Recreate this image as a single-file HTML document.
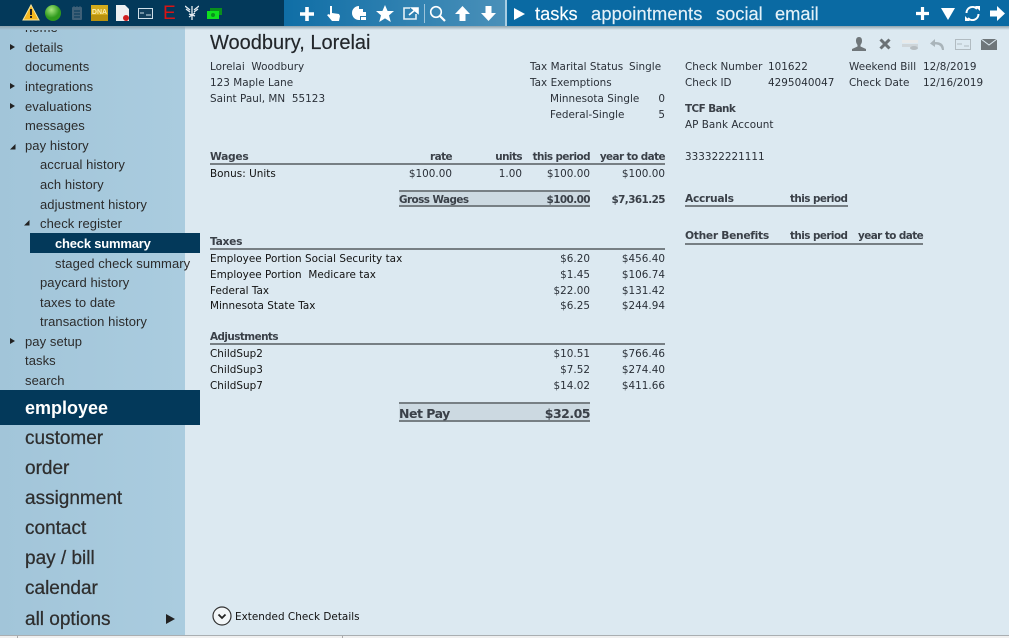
<!DOCTYPE html>
<html><head><meta charset="utf-8">
<style>
html,body{margin:0;padding:0}
body{width:1009px;height:638px;overflow:hidden;position:relative;background:#dce9f1;font-family:"DejaVu Sans",sans-serif}
#p{position:absolute;left:0;top:0;width:1009px;height:638px;overflow:hidden}
#p div,#p svg{position:absolute}
.s{white-space:nowrap;font-family:"Liberation Sans",sans-serif;font-size:13px;line-height:16px;height:16px;color:#2b2b2b;margin-top:1px;letter-spacing:.08px}
.b{white-space:nowrap;font-family:"Liberation Sans",sans-serif;font-size:19px;line-height:24px;height:24px;color:#2e2e2e;left:25px;margin-top:1px;-webkit-text-stroke:.25px #2e2e2e}
.n{white-space:nowrap;font-family:"Liberation Sans",sans-serif;font-size:18.3px;line-height:22px;height:22px;color:#e4f1f8;top:3px;-webkit-text-stroke:.15px #e4f1f8}
.t{white-space:nowrap;font-size:10.4px;line-height:14px;height:14px;color:#2a3038;letter-spacing:.03px;margin-top:1px}
.r{text-align:right;width:120px}
.h{font-weight:bold;font-size:10.4px;letter-spacing:-.55px;color:#3a4048}
.hh{font-size:10.7px;letter-spacing:-.3px}
.l{height:2px;background:#777f84}
.a{width:0;height:0;border-left:5px solid #222;border-top:3.5px solid transparent;border-bottom:3.5px solid transparent}
</style></head><body><div id="p">

<div style="left:0;top:0;width:185px;height:638px;background:linear-gradient(90deg,#a2c5d9,#aaccdf)"></div>
<div style="left:0;top:26px;width:1009px;height:4px;background:linear-gradient(#8fa3ae,rgba(200,215,225,0))"></div>

<div style="left:0;top:0;width:1009px;height:26px;background:#0a6aa3"></div>
<div style="left:0;top:0;width:284px;height:26px;background:#03395a"></div>
<div style="left:284px;top:0;width:222px;height:26px;background:linear-gradient(90deg,#0f6ea6,#4a90b9)"></div>
<div style="left:424px;top:4px;width:1px;height:19px;background:#9cc3da"></div>
<div style="left:505px;top:0;width:2px;height:26px;background:#a8cde2"></div>

<svg style="left:22px;top:4px" width="18" height="17" viewBox="0 0 18 17"><path d="M9 1L17 16H1Z" fill="#f6b81e" stroke="#f8e7a0"/><rect x="8" y="5" width="2" height="6" fill="#222"/><rect x="8" y="12" width="2" height="2" fill="#222"/></svg>
<svg style="left:45px;top:5px" width="16" height="16"><defs><radialGradient id="g" cx=".4" cy=".3"><stop offset="0" stop-color="#a8e67e"/><stop offset="1" stop-color="#2f9a1d"/></radialGradient></defs><circle cx="8" cy="8" r="8" fill="url(#g)"/></svg>
<svg style="left:71px;top:5px" width="12" height="16"><rect x="1" y="2" width="10" height="13" rx="1" fill="#3f6077"/><path d="M3 6h6M3 9h6M3 12h6" stroke="#03395a"/><path d="M3 1v2M6 1v2M9 1v2" stroke="#3f6077"/></svg>
<svg style="left:91px;top:5px" width="17" height="16"><rect width="17" height="16" fill="#d3ab1c"/><rect y="10" width="17" height="6" fill="#b9920f"/></svg>
<div style="left:91px;top:8px;width:17px;text-align:center;font:bold 7px 'Liberation Sans',sans-serif;color:#fbeeb0;line-height:10px">DNA</div>
<svg style="left:116px;top:5px" width="14" height="17"><path d="M0 0H9L13 4V16H0Z" fill="#eef0f1"/><circle cx="10" cy="13" r="3" fill="#cf1f1f"/></svg>
<svg style="left:138px;top:8px" width="15" height="11"><rect x=".5" y=".5" width="14" height="10" fill="#123f5c" stroke="#cfe0ea"/><path d="M2 5h4M8 7h5" stroke="#cfe0ea"/></svg>
<div style="left:163px;top:4px;font:19px/19px 'Liberation Sans',sans-serif;color:#d81414;white-space:nowrap">E</div>
<svg style="left:185px;top:5px" width="14" height="16"><path d="M0 1L5 5M14 1L9 5M1 4L5 7M13 4L9 7M7 1V15M4 9L10 11M10 8L4 12" stroke="#e5edf2" stroke-width="1.3" fill="none"/></svg>
<svg style="left:207px;top:8px" width="15" height="11"><rect x="3" y="0" width="12" height="7" fill="#0a8f1d"/><rect y="3" width="12" height="8" fill="#10e01f"/><circle cx="6" cy="7" r="2" fill="#0a8f1d"/></svg>

<svg style="left:299px;top:6px" width="16" height="16"><path d="M8 1v14M1 8h14" stroke="#fff" stroke-width="3.6"/></svg>
<svg style="left:326px;top:5px" width="16" height="17"><path d="M4 1h2v7l7 1 1 2-1 5H6L1 10l2-1 1 1Z" fill="#fff"/></svg>
<svg style="left:351px;top:5px" width="16" height="17"><path d="M8 1a7 7 0 1 0 0 14h1v-4h6V7h-3V4H8Z" fill="#fff"/><rect x="10" y="12" width="5" height="3" fill="#fff"/></svg>
<svg style="left:376px;top:5px" width="18" height="17"><path d="M9 0l2.6 6H18l-5 4.4L14.8 17 9 13.4 3.2 17 5 10.4 0 6h6.4Z" fill="#fff"/></svg>
<svg style="left:402px;top:6px" width="18" height="15"><path d="M8 2H2v11h12V8" stroke="#e4f0f6" stroke-width="1.6" fill="none"/><path d="M7 9l6-5M10 2h6v5z" stroke="#fff" stroke-width="1.6" fill="#fff"/></svg>
<svg style="left:429px;top:5px" width="17" height="17"><circle cx="7" cy="7" r="5.3" stroke="#fff" stroke-width="1.6" fill="none"/><path d="M11 11l5 5" stroke="#fff" stroke-width="2.2"/></svg>
<svg style="left:455px;top:6px" width="15" height="15"><path d="M7.5 0L15 8H10.5V15H4.5V8H0Z" fill="#fff"/></svg>
<svg style="left:481px;top:6px" width="15" height="15"><path d="M7.5 15L15 7H10.5V0H4.5V7H0Z" fill="#fff"/></svg>
<svg style="left:514px;top:8px" width="12" height="12"><path d="M0 0L11 6L0 12Z" fill="#fff"/></svg>

<div class="n" style="left:535px;color:#fff">tasks</div>
<div class="n" style="left:591px;letter-spacing:.15px">appointments</div>
<div class="n" style="left:716px">social</div>
<div class="n" style="left:775px">email</div>

<svg style="left:916px;top:7px" width="13" height="13"><path d="M6.5 0v13M0 6.500h13" stroke="#fff" stroke-width="3.2"/></svg>
<svg style="left:941px;top:8px" width="14" height="12"><path d="M0 0H14L7 12Z" fill="#fff"/></svg>
<svg style="left:964px;top:5px" width="17" height="17"><path d="M2.500 8a6 6 0 0 1 10.500-4M14.500 9a6 6 0 0 1-10.500 4" stroke="#fff" stroke-width="2" fill="none"/><path d="M11 1l5 0 0 5zM6 16l-5 0 0-5z" fill="#fff"/></svg>
<svg style="left:990px;top:6px" width="15" height="15"><path d="M15 7.500L7 0V4.500H0V10.500H7V15Z" fill="#fff"/></svg>

<div style="left:25px;top:30px;width:60px;height:3px;overflow:hidden"><div class="s" style="left:0;top:-11px">home</div></div>
<div class="a" style="left:10px;top:44px"></div>
<div class="s" style="left:25px;top:39px">details</div>
<div class="s" style="left:25px;top:58px">documents</div>
<div class="a" style="left:10px;top:83px"></div>
<div class="s" style="left:25px;top:78px">integrations</div>
<div class="a" style="left:10px;top:103px"></div>
<div class="s" style="left:25px;top:98px">evaluations</div>
<div class="s" style="left:25px;top:117px">messages</div>
<svg style="left:8px;top:142px" width="9" height="9"><path d="M7.500 2V7.500H2Z" fill="#222"/></svg>
<div class="s" style="left:25px;top:137px">pay history</div>
<div class="s" style="left:40px;top:156px">accrual history</div>
<div class="s" style="left:40px;top:176px">ach history</div>
<div class="s" style="left:40px;top:196px">adjustment history</div>
<svg style="left:22px;top:218px" width="9" height="9"><path d="M7.500 2V7.500H2Z" fill="#222"/></svg>
<div class="s" style="left:40px;top:215px">check register</div>
<div style="left:30px;top:233px;width:170px;height:20px;background:#03395a"></div>
<div class="s" style="left:55px;top:235px;color:#fff;font-weight:bold;letter-spacing:-.2px">check summary</div>
<div class="s" style="left:55px;top:255px">staged check summary</div>
<div class="s" style="left:40px;top:274px">paycard history</div>
<div class="s" style="left:40px;top:294px">taxes to date</div>
<div class="s" style="left:40px;top:313px">transaction history</div>
<div class="a" style="left:10px;top:338px"></div>
<div class="s" style="left:25px;top:333px">pay setup</div>
<div class="s" style="left:25px;top:352px">tasks</div>
<div class="s" style="left:25px;top:372px">search</div>

<div style="left:0;top:390px;width:200px;height:35px;background:#03395a"></div>
<div class="b" style="top:395px;font-size:18px;font-weight:bold;color:#fff;-webkit-text-stroke:0">employee</div>
<div class="b" style="top:426px">customer</div>
<div class="b" style="top:456px">order</div>
<div class="b" style="top:486px">assignment</div>
<div class="b" style="top:516px">contact</div>
<div class="b" style="top:546px">pay / bill</div>
<div class="b" style="top:576px">calendar</div>
<div class="b" style="top:607px">all options</div>
<div class="a" style="left:166px;top:614px;border-left-width:9px;border-top-width:5px;border-bottom-width:5px"></div>

<div style="left:210px;top:31px;font:20px/24px 'Liberation Sans',sans-serif;color:#22262a;white-space:nowrap;-webkit-text-stroke:.15px #22262a">Woodbury, Lorelai</div>

<svg style="left:851px;top:36px" width="16" height="16"><path d="M8 1c2.500 0 3 2 3 4s-1 3-1.500 4v1.500L15 13v2H1v-2l5.500-2.500V9C6 8 5 7 5 5s.5-4 3-4Z" fill="#6f767a"/></svg>
<svg style="left:879px;top:38px" width="12" height="12"><path d="M1.500 1.500l9 9M10.500 1.500l-9 9" stroke="#6b7276" stroke-width="3"/></svg>
<svg style="left:902px;top:39px" width="17" height="12"><rect x="0" y="1" width="16" height="3" fill="#e8eaea"/><rect x="0" y="5" width="16" height="3" fill="#cfd6da"/><ellipse cx="12" cy="9" rx="4" ry="2" fill="#b6bdc1"/></svg>
<svg style="left:930px;top:39px" width="15" height="12"><path d="M5 0L0 4.500 5 8V5.500c4 0 6 1 7 5.500h2c0-6-3-8-9-8Z" fill="#a9b4ba"/></svg>
<svg style="left:955px;top:39px" width="16" height="12"><rect x=".5" y=".5" width="15" height="10" fill="none" stroke="#b1bbc1"/><path d="M2 5h5M9 7h5" stroke="#b1bbc1"/></svg>
<svg style="left:981px;top:39px" width="16" height="11"><rect width="16" height="11" fill="#6f767a"/><path d="M0 0l8 6 8-6" stroke="#dce9f1" fill="none"/></svg>

<div class="t" style="left:210px;top:59px">Lorelai&nbsp; Woodbury</div>
<div class="t" style="left:210px;top:75px">123 Maple Lane</div>
<div class="t" style="left:210px;top:91px">Saint Paul, MN&nbsp; 55123</div>

<div class="t" style="left:530px;top:59px">Tax Marital Status</div>
<div class="t" style="left:629px;top:59px">Single</div>
<div class="t" style="left:530px;top:75px">Tax Exemptions</div>
<div class="t" style="left:550px;top:91px">Minnesota Single</div>
<div class="t r" style="left:545px;top:91px">0</div>
<div class="t" style="left:550px;top:107px">Federal-Single</div>
<div class="t r" style="left:545px;top:107px">5</div>

<div class="t" style="left:685px;top:59px">Check Number</div>
<div class="t" style="left:768px;top:59px">101622</div>
<div class="t" style="left:849px;top:59px">Weekend Bill</div>
<div class="t" style="left:923px;top:59px">12/8/2019</div>
<div class="t" style="left:685px;top:75px">Check ID</div>
<div class="t" style="left:768px;top:75px">4295040047</div>
<div class="t" style="left:849px;top:75px">Check Date</div>
<div class="t" style="left:923px;top:75px">12/16/2019</div>
<div class="t h" style="left:685px;top:101px">TCF Bank</div>
<div class="t" style="left:685px;top:117px">AP Bank Account</div>
<div class="t" style="left:685px;top:149px">333322221111</div>

<div class="t h hh" style="left:210px;top:149px">Wages</div>
<div class="t h r" style="left:332px;top:149px">rate</div>
<div class="t h r" style="left:402px;top:149px">units</div>
<div class="t h r" style="left:470px;top:149px">this period</div>
<div class="t h r" style="left:545px;top:149px">year to date</div>
<div class="l" style="left:210px;top:163px;width:455px"></div>
<div class="t" style="left:210px;top:166px;color:#111">Bonus: Units</div>
<div class="t r" style="left:332px;top:166px">$100.00</div>
<div class="t r" style="left:402px;top:166px">1.00</div>
<div class="t r" style="left:470px;top:166px">$100.00</div>
<div class="t r" style="left:545px;top:166px">$100.00</div>

<div style="left:399px;top:190px;width:191px;height:17px;background:#ccd9e1;border-top:2px solid #777f84;border-bottom:2px solid #777f84;box-sizing:border-box"></div>
<div class="t h" style="left:399px;top:192px">Gross Wages</div>
<div class="t h r" style="left:470px;top:192px">$100.00</div>
<div class="t h r" style="left:545px;top:192px">$7,361.25</div>

<div class="t h hh" style="left:685px;top:191px">Accruals</div>
<div class="t h" style="left:790px;top:191px">this period</div>
<div class="l" style="left:685px;top:205px;width:163px"></div>
<div class="t h hh" style="left:685px;top:228px">Other Benefits</div>
<div class="t h" style="left:790px;top:228px">this period</div>
<div class="t h" style="left:858px;top:228px">year to date</div>
<div class="l" style="left:685px;top:243px;width:238px"></div>

<div class="t h hh" style="left:210px;top:234px">Taxes</div>
<div class="l" style="left:210px;top:248px;width:455px"></div>
<div class="t" style="left:210px;top:251px;color:#111">Employee Portion Social Security tax</div>
<div class="t r" style="left:470px;top:251px">$6.20</div>
<div class="t r" style="left:545px;top:251px">$456.40</div>
<div class="t" style="left:210px;top:267px;color:#111">Employee Portion&nbsp; Medicare tax</div>
<div class="t r" style="left:470px;top:267px">$1.45</div>
<div class="t r" style="left:545px;top:267px">$106.74</div>
<div class="t" style="left:210px;top:283px;color:#111">Federal Tax</div>
<div class="t r" style="left:470px;top:283px">$22.00</div>
<div class="t r" style="left:545px;top:283px">$131.42</div>
<div class="t" style="left:210px;top:298px;color:#111">Minnesota State Tax</div>
<div class="t r" style="left:470px;top:298px">$6.25</div>
<div class="t r" style="left:545px;top:298px">$244.94</div>

<div class="t h" style="left:210px;top:329px">Adjustments</div>
<div class="l" style="left:210px;top:343px;width:455px"></div>
<div class="t" style="left:210px;top:346px;color:#111">ChildSup2</div>
<div class="t r" style="left:470px;top:346px">$10.51</div>
<div class="t r" style="left:545px;top:346px">$766.46</div>
<div class="t" style="left:210px;top:362px;color:#111">ChildSup3</div>
<div class="t r" style="left:470px;top:362px">$7.52</div>
<div class="t r" style="left:545px;top:362px">$274.40</div>
<div class="t" style="left:210px;top:378px;color:#111">ChildSup7</div>
<div class="t r" style="left:470px;top:378px">$14.02</div>
<div class="t r" style="left:545px;top:378px">$411.66</div>

<div style="left:399px;top:402px;width:191px;height:20px;background:#ccd9e1;border-top:2px solid #777f84;border-bottom:2px solid #777f84;box-sizing:border-box"></div>
<div class="t h" style="left:399px;top:406px;font-size:12.5px;letter-spacing:-.5px">Net Pay</div>
<div class="t h r" style="left:470px;top:406px;font-size:12.5px;letter-spacing:-.5px">$32.05</div>

<svg style="left:212px;top:606px" width="20" height="20"><circle cx="10" cy="10" r="9" fill="#f2f6f8" stroke="#333" stroke-width="1.200"/><path d="M6.500 8.500L10 12l3.500-3.500" stroke="#222" stroke-width="1.800" fill="none"/></svg>
<div class="t" style="left:235px;top:609px;color:#111">Extended Check Details</div>

<div style="left:0;top:635px;width:1009px;height:1px;background:#a9aeb1"></div>
<div style="left:0;top:636px;width:1009px;height:2px;background:#f0f0f0"></div>
<div style="left:17px;top:636px;width:1px;height:2px;background:#aaa"></div>
<div style="left:342px;top:636px;width:1px;height:2px;background:#aaa"></div>
</div></body></html>
